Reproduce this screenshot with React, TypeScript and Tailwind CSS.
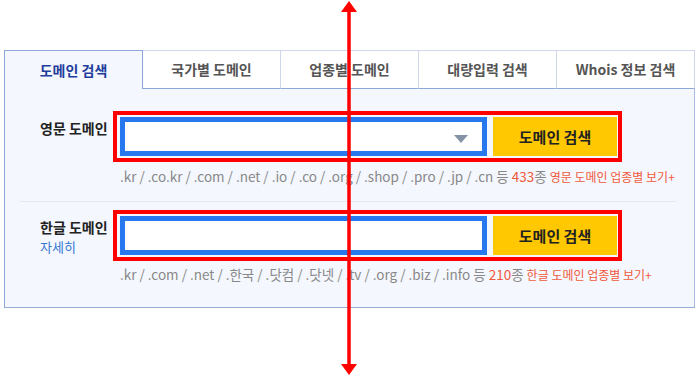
import React from "react";

const tabs = ["도메인 검색", "국가별 도메인", "업종별 도메인", "대량입력 검색", "Whois 정보 검색"];

const font = { fontFamily: '"Noto Sans CJK KR", "Noto Sans", sans-serif' };

const SearchBox = ({ select }: { select?: boolean }) => (
  <div className="flex w-[509px] h-[51px] border-4 border-[#ff0000] py-[2px] pl-[3px] pr-[1px] gap-[6px]">
    <div className="relative w-[367px] h-full border-[5px] border-[#2778ef] bg-white">
      {select && (
        <div className="absolute right-[14px] top-[13px] w-0 h-0 border-l-[7px] border-r-[7px] border-t-[8px] border-l-transparent border-r-transparent border-t-[#8593a6]" />
      )}
    </div>
    <button className="w-[124px] h-full bg-[#ffc800] text-[15px] font-bold text-[#222] leading-none">
      도메인 검색
    </button>
  </div>
);

const App = () => {
  return (
    <div className="relative w-[700px] h-[376px] bg-white" style={font}>
      <div className="absolute left-[4px] top-[50px] w-[691px]">
        <div className="flex h-[39px]">
          {tabs.map((t, i) =>
            i === 0 ? (
              <div
                key={t}
                className="flex-1 flex items-center justify-center border-t border-l border-r border-[#8ea8dc] bg-[#f4f7fd] text-[14px] font-bold text-[#1f3e9c]"
              >
                {t}
              </div>
            ) : (
              <div
                key={t}
                className="flex-1 flex items-center justify-center border-t border-r border-b border-t-[#cfd8ea] border-r-[#cfd8ea] border-b-[#8ea8dc] bg-white text-[14px] font-semibold text-[#555]"
              >
                {t}
              </div>
            )
          )}
        </div>
        <div className="h-[219px] border-l border-r border-b border-l-[#8ea8dc] border-r-[#a8badf] border-b-[#98acd8] bg-[#f4f7fd] pt-[22px] pl-[35px]">
          <div className="flex">
            <div className="w-[73px] shrink-0 pt-[7px] text-[14px] font-bold text-[#222] leading-[20px]">영문 도메인</div>
            <div>
              <SearchBox select />
              <div className="mt-[4px] pl-[7px] text-[13.5px] leading-[20px] text-[#888] whitespace-nowrap">
                .kr / .co.kr / .com / .net / .io / .co / .org / .shop / .pro / .jp / .cn 등{" "}
                <span className="text-[#f05a3c]">433</span>종{" "}
                <span className="text-[12px] text-[#f05a3c]">영문 도메인 업종별 보기+</span>
              </div>
            </div>
          </div>
          <div className="ml-[-20px] mr-[18px] mt-[14px] border-t border-[#e3e7ee]" />
          <div className="flex mt-[8px]">
            <div className="w-[73px] shrink-0 pt-[7px]">
              <div className="text-[14px] font-bold text-[#222] leading-[20px]">한글 도메인</div>
              <div className="text-[13px] text-[#3577d4] leading-[20px]">자세히</div>
            </div>
            <div>
              <SearchBox />
              <div className="mt-[3px] pl-[7px] text-[13.5px] leading-[20px] text-[#888] whitespace-nowrap">
                .kr / .com / .net / .한국 / .닷컴 / .닷넷 / .tv / .org / .biz / .info 등{" "}
                <span className="text-[#f05a3c]">210</span>종{" "}
                <span className="text-[12px] text-[#f05a3c]">한글 도메인 업종별 보기+</span>
              </div>
            </div>
          </div>
        </div>
      </div>
      <svg className="absolute left-0 top-0" width="700" height="376" viewBox="0 0 700 376">
        <line x1="349" y1="10" x2="349" y2="366" stroke="#ff0000" strokeWidth="3.5" />
        <polygon points="341,12 349,1 357,12" fill="#ff0000" />
        <polygon points="341,364 349,375 357,364" fill="#ff0000" />
      </svg>
    </div>
  );
};

export default App;
